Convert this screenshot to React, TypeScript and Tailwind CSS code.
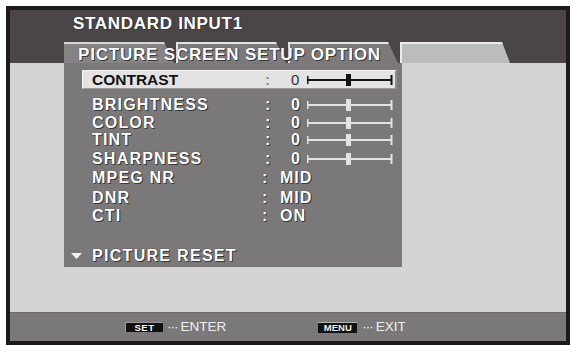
const font = { fontFamily: '"Liberation Sans", Arial, sans-serif' };

function Slider({ dark }: { dark?: boolean }) {
  const c = dark ? '#141414' : '#e2e2e2';
  return (
    <svg width="86" height="12" viewBox="0 0 86 12">
      <rect x="0" y="5" width="85" height="2" fill={c} />
      <rect x="0" y="2" width="1.5" height="8" fill={c} />
      <rect x="83.5" y="1" width="2" height="10" fill={c} />
      <rect x="39" y="0" width="5" height="12" fill={c} />
    </svg>
  );
}

type Row = { label: string; value: string; slider?: boolean; h: string };

const rows: Row[] = [
  { label: 'BRIGHTNESS', value: '0', slider: true, h: 'h-[18px]' },
  { label: 'COLOR', value: '0', slider: true, h: 'h-[17px]' },
  { label: 'TINT', value: '0', slider: true, h: 'h-[18px]' },
  { label: 'SHARPNESS', value: '0', slider: true, h: 'h-[19px]' },
  { label: 'MPEG NR', value: 'MID', h: 'h-[19px]' },
  { label: 'DNR', value: 'MID', h: 'h-[21px]' },
  { label: 'CTI', value: 'ON', h: 'h-[16px]' },
];

const shadow = '[text-shadow:0_0_1px_#2a2a2a,1px_1px_0_#3a3a3a]';

export default function App() {
  return (
    <div className="w-[573px] h-[345px] bg-white overflow-hidden pt-[6px] pl-[6px]" style={font}>
      <div className="w-[564px] h-[339px] border-[4px] border-[#1c1b1b] flex flex-col bg-[#d4d4d4]">
        {/* header */}
        <div className="bg-[#4a4647] h-[53px] flex flex-col pt-[5px] pl-[63px]">
          <div className={`text-white font-bold text-[17px] leading-none tracking-[0.7px] h-[17px] ${shadow}`}>
            STANDARD INPUT1
          </div>
          <div className="relative mt-[10px] ml-[-9px] h-[21px] flex gap-[2px]">
            <div className="w-[110px] h-full bg-[#858383] border-t-2 border-[#d6d6d6] [clip-path:polygon(0_0,calc(100%-10px)_0,100%_100%,0_100%)]" />
            <div className="w-[110px] h-full bg-[#7c7a7a] border-t-2 border-l-2 border-[#e4e4e4] [clip-path:polygon(0_0,calc(100%-10px)_0,100%_100%,0_100%)]" />
            <div className="w-[110px] h-full bg-[#7c7a7a] border-t-2 border-l-2 border-[#e4e4e4] [clip-path:polygon(0_0,calc(100%-10px)_0,100%_100%,0_100%)]" />
            <div className="w-[110px] h-full bg-[#bcbcbc] border-t-2 border-l-2 border-[#ececec] [clip-path:polygon(0_0,calc(100%-8px)_0,100%_100%,0_100%)]" />
            <span className={`absolute left-[14px] top-[4px] text-white font-bold text-[17px] leading-none tracking-[0.8px] whitespace-nowrap ${shadow}`}>
              PICTURE SCREEN SETUP OPTION
            </span>
          </div>
        </div>

        {/* body */}
        <div className="flex-1 pl-[54px]">
          <div className="w-[338px] h-[204px] bg-[#7a7878] flex flex-col pt-[7px]">
            {/* selected row */}
            <div className="ml-[18px] w-[315px] h-[19px] bg-[#e3e3e3] border-t border-l border-[#f4f4f4] border-r-2 border-b border-r-[#8c8c8c] border-b-[#9a9a9a] flex items-center pl-[9px]">
              <span className="w-[173px] text-[#111] font-bold text-[15.5px] leading-none">CONTRAST</span>
              <span className="w-[26px] text-[#8a8a8a] font-bold text-[15px] leading-none">:</span>
              <span className="w-[16px] text-[#333] text-[15px] leading-none">0</span>
              <Slider dark />
            </div>
            <div className="h-[7px]" />
            {rows.map((r) => (
              <div key={r.label} className={`${r.h} flex items-center pl-[28px] text-white font-bold text-[16px] leading-none ${shadow}`}>
                <span className={`${r.slider ? 'w-[173px]' : 'w-[170px]'} tracking-[1.2px]`}>{r.label}</span>
                <span className={r.slider ? 'w-[26px]' : 'w-[18px]'}>:</span>
                {r.slider ? (
                  <>
                    <span className="w-[16px]">{r.value}</span>
                    <Slider />
                  </>
                ) : (
                  <span className="tracking-[1px]">{r.value}</span>
                )}
              </div>
            ))}
            <div className="h-[23px]" />
            <div className={`h-[18px] flex items-center pl-[7px] text-white font-bold text-[16px] leading-none tracking-[1.3px] ${shadow}`}>
              <svg width="12" height="7" viewBox="0 0 12 7" className="mr-[9px]">
                <polygon points="0,0 11,0 5.5,6" fill="#f2f2f2" />
              </svg>
              PICTURE RESET
            </div>
          </div>
        </div>

        {/* bottom bar */}
        <div className="h-[29px] bg-[#7a7878] border-t border-[#6a6868] flex items-center pl-[115px] text-[13.5px] text-[#f0f0f0] leading-none">
          <span className="w-[38px] h-[10px] bg-[#111] border-t border-l border-[#9a9a9a] flex items-center justify-center text-white font-bold text-[9.5px] tracking-[0.5px]">
            SET
          </span>
          <span className="ml-[4px] tracking-[-1px]">···</span>
          <span className="ml-[3px]">ENTER</span>
          <span className="ml-[92px] w-[39px] h-[11px] bg-[#111] border-t border-[#b4b4b4] flex items-center justify-center text-[#eee] font-bold text-[9.5px]">
            MENU
          </span>
          <span className="ml-[5px] tracking-[-1px]">···</span>
          <span className="ml-[3px]">EXIT</span>
        </div>
      </div>
    </div>
  );
}
